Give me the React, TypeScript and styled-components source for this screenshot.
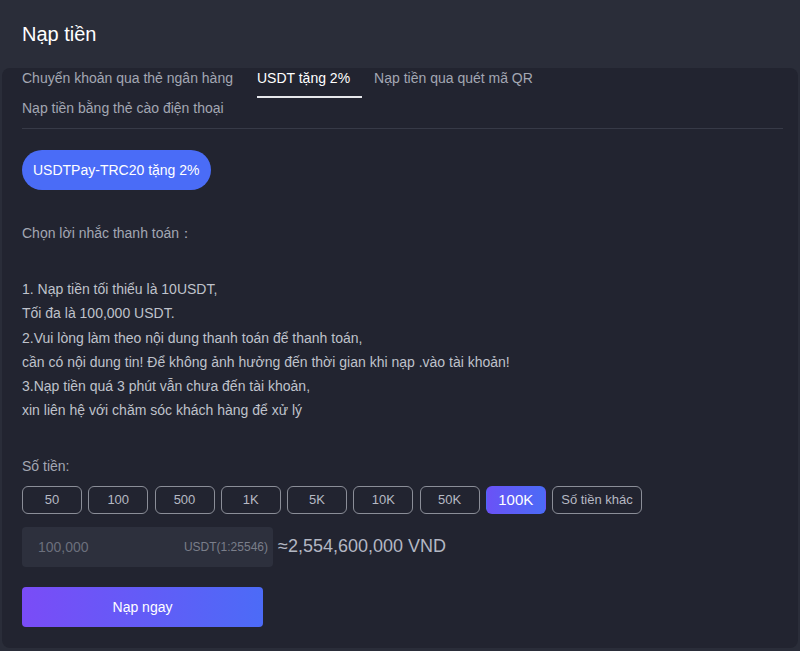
import React, { useState } from "react";
import styled, { createGlobalStyle } from "styled-components";

const GlobalStyle = createGlobalStyle`
  html, body {
    margin: 0;
    padding: 0;
    background-color: #2a2d39;
    font-family: "Liberation Sans", Arial, sans-serif;
  }
`;

const Page = styled.div`
  width: 800px;
  height: 651px;
  overflow: hidden;
  background-color: #2a2d39;
`;

const Header = styled.div`
  height: 68px;
  display: flex;
  align-items: center;
  padding: 0 22px;
  box-sizing: border-box;
`;

const Title = styled.h1`
  margin: 0;
  font-size: 20px;
  font-weight: 400;
  color: #ffffff;
`;

const Panel = styled.div`
  margin: 0 2px;
  height: 580px;
  padding: 0 15px 0 20px;
  background-color: #222430;
  border-radius: 8px;
  box-sizing: border-box;
`;

const Tabs = styled.div`
  border-bottom: 1px solid #373a47;
`;

const TabList = styled.div`
  display: flex;
  flex-wrap: wrap;
  max-width: 700px;
`;

const Tab = styled.div<{ active?: boolean }>`
  height: 30px;
  box-sizing: border-box;
  padding-right: 12px;
  margin-right: 12px;
  font-size: 14px;
  line-height: 20px;
  color: ${props => props.active ? "#ffffff" : "#a3a7b3"};
  border-bottom: 2px solid ${props => props.active ? "#e6e7eb" : "transparent"};
  cursor: pointer;
  white-space: nowrap;
`;

const ChannelButton = styled.button`
  margin-top: 21px;
  height: 40px;
  padding: 0 11px;
  border: 0;
  border-radius: 20px;
  background-color: #4a6cf7;
  color: #ffffff;
  font-family: inherit;
  font-size: 14px;
  cursor: pointer;
`;

const Label = styled.div<{ top: number }>`
  margin-top: ${props => props.top}px;
  font-size: 14px;
  line-height: 20px;
  color: #a3a7b3;
`;

const Notes = styled.div`
  margin-top: 34px;
  font-size: 14px;
  line-height: 24.3px;
  color: #bfc2cb;
`;

const AmountRow = styled.div`
  margin-top: 10px;
  display: flex;
  gap: 6.25px;
`;

const AmountButton = styled.button<{ active?: boolean; wide?: boolean }>`
  width: ${props => props.wide ? "90px" : "60px"};
  height: 28px;
  padding: 0;
  box-sizing: border-box;
  border-radius: 6px;
  border: 1px solid ${props => props.active ? "transparent" : "#8b8e98"};
  background: ${props => props.active ? "linear-gradient(90deg, #6a52f6, #4b6bf6)" : "transparent"};
  color: ${props => props.active ? "#ffffff" : "#b6b9c3"};
  font-family: inherit;
  font-size: ${props => props.active ? "15px" : "13px"};
  cursor: pointer;
`;

const InputRow = styled.div`
  margin-top: 13px;
  display: flex;
  align-items: center;
  gap: 5px;
`;

const InputBox = styled.div`
  width: 251px;
  height: 40px;
  box-sizing: border-box;
  padding: 0 5px 0 16px;
  display: flex;
  align-items: center;
  justify-content: space-between;
  background-color: #2d303d;
  border-radius: 4px;
`;

const AmountInput = styled.input`
  width: 120px;
  border: 0;
  outline: none;
  background: transparent;
  font-family: inherit;
  font-size: 14px;
  color: #ffffff;
  padding: 0;
  &::placeholder {
    color: #6b6f7c;
  }
`;

const Unit = styled.span`
  font-size: 12px;
  color: #7a7e8a;
`;

const Converted = styled.span`
  font-size: 18px;
  color: #b3b7c3;
`;

const SubmitButton = styled.button`
  margin-top: 20px;
  width: 241px;
  height: 40px;
  border: 0;
  border-radius: 4px;
  background: linear-gradient(90deg, #7a4cf7, #4c6bf7);
  color: #ffffff;
  font-family: inherit;
  font-size: 14px;
  cursor: pointer;
`;

const TABS = [
  "Chuyển khoản qua thẻ ngân hàng",
  "USDT tặng 2%",
  "Nạp tiền qua quét mã QR",
  "Nạp tiền bằng thẻ cào điện thoại",
];

const AMOUNTS = ["50", "100", "500", "1K", "5K", "10K", "50K", "100K"];

const NOTES = [
  "1. Nạp tiền tối thiểu là 10USDT,",
  "Tối đa là 100,000 USDT.",
  "2.Vui lòng làm theo nội dung thanh toán để thanh toán,",
  "cần có nội dung tin! Để không ảnh hưởng đến thời gian khi nạp .vào tài khoản!",
  "3.Nạp tiền quá 3 phút vẫn chưa đến tài khoản,",
  "xin liên hệ với chăm sóc khách hàng để xử lý",
];

const App: React.FC = () => {
  const [tab, setTab] = useState(1);
  const [amount, setAmount] = useState("100K");

  return (
    <Page>
      <GlobalStyle />
      <Header>
        <Title>Nạp tiền</Title>
      </Header>
      <Panel>
        <Tabs>
          <TabList>
            {TABS.map((name, i) => (
              <Tab key={name} active={i === tab} onClick={() => setTab(i)}>{name}</Tab>
            ))}
          </TabList>
        </Tabs>
        <ChannelButton>USDTPay-TRC20 tặng 2%</ChannelButton>
        <Label top={33}>Chọn lời nhắc thanh toán：</Label>
        <Notes>
          {NOTES.map(line => <div key={line}>{line}</div>)}
        </Notes>
        <Label top={33}>Số tiền:</Label>
        <AmountRow>
          {AMOUNTS.map(a => (
            <AmountButton key={a} active={a === amount} onClick={() => setAmount(a)}>{a}</AmountButton>
          ))}
          <AmountButton wide>Số tiền khác</AmountButton>
        </AmountRow>
        <InputRow>
          <InputBox>
            <AmountInput placeholder="100,000" />
            <Unit>USDT(1:25546)</Unit>
          </InputBox>
          <Converted>≈2,554,600,000 VND</Converted>
        </InputRow>
        <SubmitButton>Nạp ngay</SubmitButton>
      </Panel>
    </Page>
  );
};

export default App;
